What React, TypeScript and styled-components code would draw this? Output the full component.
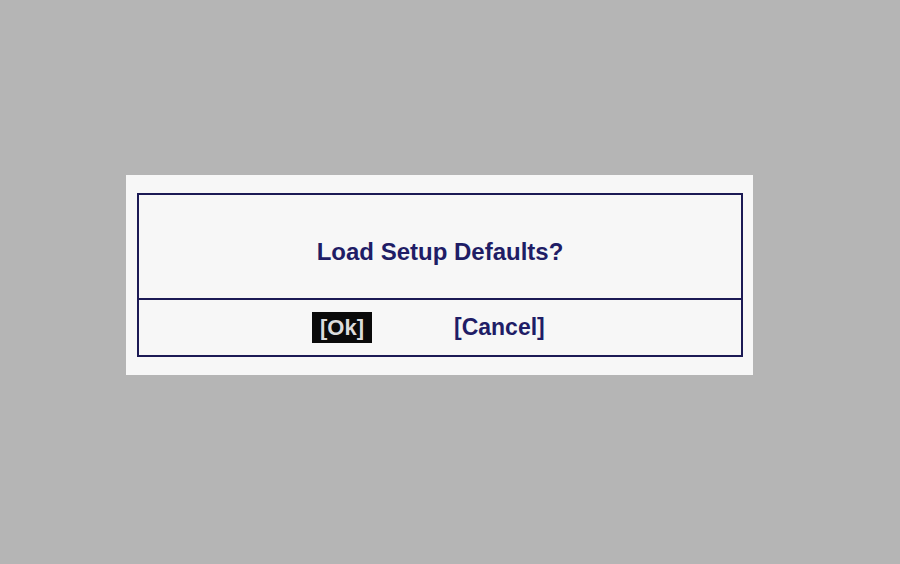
import React from "react";
import styled, { createGlobalStyle } from "styled-components";

const Global = createGlobalStyle`
  html, body { margin: 0; padding: 0; }
  body { background: #b5b5b5; width: 900px; height: 564px; overflow: hidden; }
`;

const Screen = styled.div`
  width: 900px;
  height: 564px;
  box-sizing: border-box;
  padding: 175px 0 0 126px;
  background: #b5b5b5;
  font-family: "Liberation Sans", Arial, sans-serif;
`;

const Panel = styled.div`
  width: 627px;
  height: 200px;
  box-sizing: border-box;
  padding: 18px 10px 18px 11px;
  background: #f7f7f7;
`;

const Frame = styled.div`
  width: 606px;
  height: 164px;
  box-sizing: border-box;
  border: 2px solid #1c1a55;
  display: flex;
  flex-direction: column;
`;

const Message = styled.div`
  height: 105px;
  border-bottom: 2px solid #1c1a55;
  display: flex;
  align-items: center;
  justify-content: center;
  padding-top: 10px;
  box-sizing: border-box;
  font-size: 24px;
  font-weight: bold;
  color: #1f1d66;
`;

const Actions = styled.div`
  flex: 1;
  display: flex;
  align-items: center;
  padding-left: 173px;
  gap: 82px;
`;

const Choice = styled.span<{ $selected?: boolean }>`
  display: inline-flex;
  align-items: center;
  justify-content: center;
  height: 31px;
  padding: 0 ${(p) => (p.$selected ? "8px" : "0")};
  font-size: ${(p) => (p.$selected ? "22px" : "23px")};
  font-weight: bold;
  background: ${(p) => (p.$selected ? "#0a0a0a" : "transparent")};
  color: ${(p) => (p.$selected ? "#dcdcdc" : "#1f1d66")};
`;

export default function App() {
  return (
    <>
      <Global />
      <Screen>
        <Panel>
          <Frame>
            <Message>Load Setup Defaults?</Message>
            <Actions>
              <Choice $selected>[Ok]</Choice>
              <Choice>[Cancel]</Choice>
            </Actions>
          </Frame>
        </Panel>
      </Screen>
    </>
  );
}
